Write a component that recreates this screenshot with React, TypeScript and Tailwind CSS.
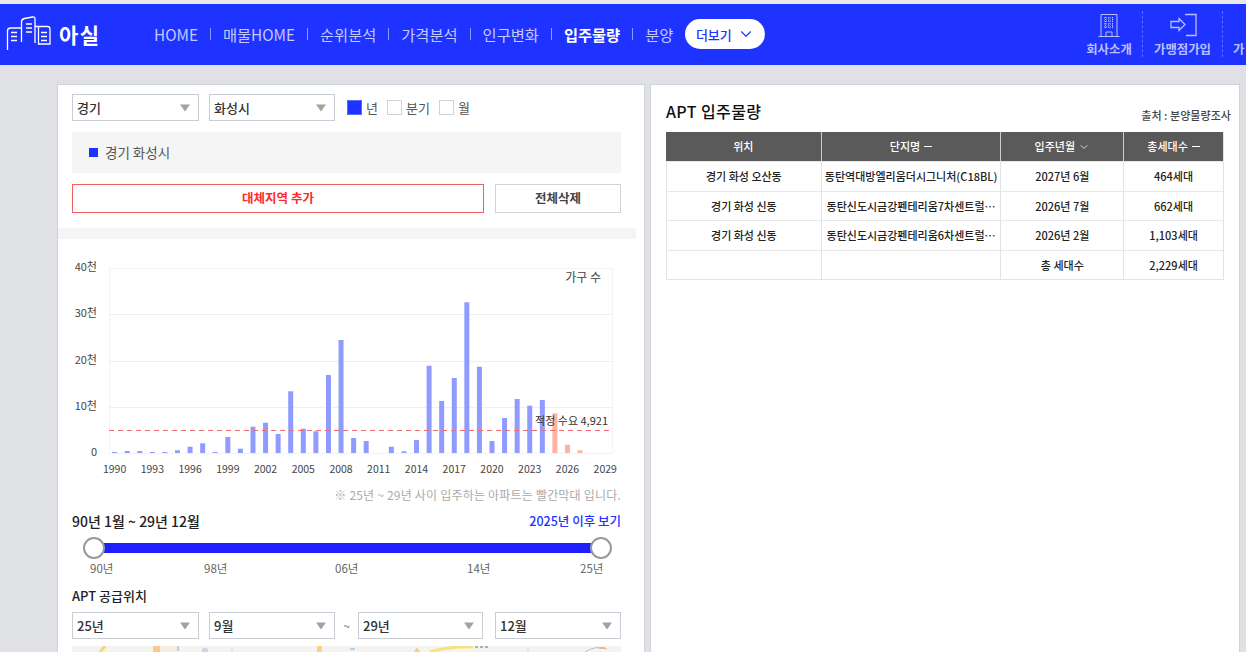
import React from "react";
import { ChevronDown } from "lucide-react";

const heights: [number, number][] = [
  [1990, 1], [1991, 2], [1992, 2], [1993, 1], [1994, 1], [1995, 2.7], [1996, 6.3], [1997, 9.7], [1998, 1], [1999, 16],
  [2000, 4.3], [2001, 26.3], [2002, 30.3], [2003, 19], [2004, 61.7], [2005, 24.3], [2006, 21.7], [2007, 78], [2008, 113],
  [2009, 15], [2010, 12], [2012, 6.3], [2013, 1.7], [2014, 13], [2015, 87.3], [2016, 52], [2017, 75], [2018, 150.7],
  [2019, 86.3], [2020, 12], [2021, 35], [2022, 54], [2023, 47.3], [2024, 53], [2025, 39.7], [2026, 8.3], [2027, 2.7],
];

const xLabels = [1990, 1993, 1996, 1999, 2002, 2005, 2008, 2011, 2014, 2017, 2020, 2023, 2026, 2029];
const yLabels: [string, number][] = [["40천", 268], ["30천", 314], ["20천", 361], ["10천", 407], ["0", 453]];

function Select({ label, w }: { label: string; w: string }) {
  return (
    <div className={`${w} h-[27px] shrink-0 flex items-center justify-between pl-[4px] pr-[8px] bg-white border border-[#c9cdd6] text-[13px] font-medium text-[#333]`}>
      <span>{label}</span>
      <svg width="10" height="8" viewBox="0 0 10 8"><path d="M0 0.5h10L5 7.500z" fill="#a3a3a3" /></svg>
    </div>
  );
}

function Check({ label, on }: { label: string; on?: boolean }) {
  return (
    <div className="flex items-center gap-[4px] text-[13px] text-[#555]">
      <span className={`w-[15px] h-[15px] border ${on ? "border-[#5a6bff] bg-[#1e33ff] ring-1 ring-inset ring-[#1e33ff]" : "border-[#cfd2da] bg-white"}`} />
      <span>{label}</span>
    </div>
  );
}

function NavSep() {
  return <span className="w-px h-[12px] bg-[#8f9bff]" />;
}

function Logo() {
  return (
    <svg width="52" height="36" viewBox="0 16 52 36" fill="none" stroke="#fff" strokeWidth="1.300" className="shrink-0">
      <path d="M7.500 50V31q0-3 3-3H21" />
      <path d="M21.500 42V22q0-3 3-3.500l8-1.500q2.500-.5 2.500 2V43" />
      <path d="M35 26.500h12.500q2.500 0 2.500 2.500V44H38.500V27" />
      <path d="M11 32.500h6M11 36.500h6M11 40.500h6M26 24h6M26 28h6M26 32h6M41 32.500h6M41 36.500h6M41 40.500h6" />
    </svg>
  );
}

function Chart() {
  const x = (y: number) => 114.6 + (y - 1990) * 12.58;
  return (
    <svg width="586" height="250" viewBox="58 240 586 250" className="block mt-px">
      <rect x="109.500" y="268.500" width="503" height="185" fill="#fff" stroke="#f3f3f3" />
      {[314, 361, 407].map((y) => (
        <line key={y} x1="109" x2="612" y1={y + 0.5} y2={y + 0.5} stroke="#efefef" />
      ))}
      {heights.map(([y, h]) => (
        <rect key={y} x={x(y) - 2.500} y={453 - h} width="5" height={h} fill={y >= 2025 ? "#ffb2a4" : "#8f9bff"} />
      ))}
      <line x1="109" x2="612" y1="430.500" y2="430.500" stroke="#f36b6b" strokeDasharray="5 4" />
      {yLabels.map(([t, y]) => (
        <text key={t} x="97" y={y + 3} textAnchor="end" fontSize="11" fill="#444">{t}</text>
      ))}
      {xLabels.map((y) => (
        <text key={y} x={x(y)} y="473" textAnchor="middle" fontSize="10.500" fill="#444">{y}</text>
      ))}
      <text x="601" y="282" textAnchor="end" fontSize="12" fill="#444">가구 수</text>
      <text x="608" y="425" textAnchor="end" fontSize="11" fill="#333">적정 수요 4,921</text>
    </svg>
  );
}

function MapStrip() {
  return (
    <svg width="549" height="6" viewBox="0 0 549 6" className="block bg-[#f3f3f0]">
      <path d="M28 6L33 0" stroke="#f7d774" strokeWidth="3" fill="none" />
      <path d="M81 6V0h7v6z" fill="#f9c98d" />
      <path d="M88 0h18v6H88z" fill="#f6eee2" />
      <path d="M106 0v5" stroke="#a9c4dc" strokeWidth="1.500" />
      <path d="M130 3q3-3 6 0v3h-6z" fill="#c9d6e2" />
      <path d="M160 0v6M456 0v6" stroke="#dddddd" />
      <path d="M245 0h5v6h-5z" fill="#f7d774" />
      <path d="M278 3h5" stroke="#a9d4f0" strokeWidth="2" />
      <path d="M342 6l3-5 3 5z" fill="#f9c98d" />
      <path d="M358 6Q378 0 401 1" stroke="#f7e27a" strokeWidth="3" fill="none" />
      <path d="M403 1h14" stroke="#999" strokeWidth="1.500" strokeDasharray="3 2" />
      <path d="M513 6Q523 -1 535 3" stroke="#bdbdbd" fill="none" />
      <path d="M527 2h6" stroke="#f3b877" strokeWidth="2" />
    </svg>
  );
}

export default function App() {
  return (
    <div className="w-[1246px] h-[652px] overflow-hidden bg-[#dfe1e4] font-['Noto_Sans_CJK_KR','Noto_Sans',sans-serif]">
      <div className="h-[4px] bg-[#e8e8e8]" />
      <header className="h-[60.500px] bg-[#1e33ff] flex items-center overflow-hidden">
        <div className="w-[154px] shrink-0 flex items-center gap-[7px]">
          <Logo />
          <span className="text-white text-[21px] font-bold tracking-[1.500px] leading-none">아실</span>
        </div>
        <nav className="flex items-center gap-[12px] text-[15.300px] text-[#c4caff] shrink-0">
          <span>HOME</span><NavSep />
          <span>매물HOME</span><NavSep />
          <span>순위분석</span><NavSep />
          <span>가격분석</span><NavSep />
          <span>인구변화</span><NavSep />
          <span className="text-white font-bold">입주물량</span><NavSep />
          <span>분양</span>
        </nav>
        <button className="ml-[12px] w-[80px] h-[30px] shrink-0 rounded-full bg-white text-[#1e33ff] text-[13px] font-medium flex items-center justify-center gap-[5px]">
          더보기 <ChevronDown size={18} strokeWidth={1.5} />
        </button>
        <div className="ml-auto flex shrink-0 items-stretch h-[46px] w-[170px] text-[12.400px] font-bold text-[#b9c0ff]">
          <div className="w-[67px] shrink-0 flex flex-col items-center justify-end pb-px border-r border-dashed border-[#5a6bff]">
            <svg width="24" height="24" viewBox="0 0 24 24" fill="none" stroke="#b9c0ff" strokeWidth="1">
              <path d="M4 23V1.500h16V23M1.500 23.500h21M9 23v-4h6v4" />
              <path d="M7 5h10M7 8h10M7 11h10M7 14h10M8.500 4v11M12 4v11M15.500 4v11" strokeDasharray="1 1" />
            </svg>
            <span className="mt-[5px] leading-[14px]">회사소개</span>
          </div>
          <div className="w-[80px] shrink-0 flex flex-col items-center justify-end pb-px border-r border-dashed border-[#5a6bff]">
            <svg width="28" height="24" viewBox="0 0 28 24" fill="none" stroke="#b9c0ff" strokeWidth="1.300">
              <path d="M16 1.500h11v21H17M2 8.500h8V5.500l6 6-6 6V14.500H2z" />
            </svg>
            <span className="mt-[5px] leading-[14px]">가맹점가입</span>
          </div>
          <div className="pl-[10px] pb-px flex items-end leading-[14px]">가</div>
        </div>
      </header>

      <main className="flex gap-[5px] pl-[57px] pt-[19.500px]">
        <section className="w-[588px] h-[600px] shrink-0 bg-white border border-[#cfd2d6]">
          <div className="pl-[14px] pr-[23px]">
            <div className="flex items-center pt-[9px]">
              <Select label="경기" w="w-[127px]" />
              <div className="w-[10px]" />
              <Select label="화성시" w="w-[126px]" />
              <div className="flex items-center gap-[9px] ml-[12px]">
                <Check label="년" on />
                <Check label="분기" />
                <Check label="월" />
              </div>
            </div>
            <div className="mt-[11px] h-[41px] bg-[#f5f5f5] flex items-center pl-[17px] gap-[7px] text-[13.500px] text-[#555]">
              <span className="w-[9px] h-[9px] bg-[#1e33ff]" />
              경기 화성시
            </div>
            <div className="mt-[11px] flex gap-[11px]">
              <button className="w-[412px] h-[29px] border border-[#f06060] text-[#ff2a2a] text-[12.500px] font-bold">대체지역 추가</button>
              <button className="w-[126px] h-[29px] border border-[#cfd2d6] text-[#444] text-[12.500px] font-bold">전체삭제</button>
            </div>
          </div>
          <div className="mt-[15px] w-[578px] h-[11px] bg-[#f5f5f5]" />
          <Chart />
          <div className="pl-[14px] pr-[23px]">
            <p className="mt-[-3px] text-right text-[12px] leading-[16px] tracking-[0.2px] text-[#aaa]">※ 25년 ~ 29년 사이 입주하는 아파트는 빨간막대 입니다.</p>
            <div className="mt-[8px] flex justify-between items-center text-[14px] font-medium leading-[20px]">
              <span className="text-[#222]">90년 1월 ~ 29년 12월</span>
              <span className="text-[#1e33ff] text-[12.500px]">2025년 이후 보기</span>
            </div>
            <div className="mt-[12px] relative ml-[22px] mr-[20px] h-[10px] bg-[#1e1eff]">
              <span className="absolute left-[-11px] top-[-6px] w-[22px] h-[22px] rounded-full bg-white border-2 border-[#999]" />
              <span className="absolute right-[-11px] top-[-6px] w-[22px] h-[22px] rounded-full bg-white border-2 border-[#999]" />
            </div>
            <div className="mt-[7px] relative h-[16px] text-[11.500px] leading-[16px] text-[#666]">
              <span className="absolute left-[18px]">90년</span>
              <span className="absolute left-[132px]">98년</span>
              <span className="absolute left-[263px]">06년</span>
              <span className="absolute left-[395px]">14년</span>
              <span className="absolute left-[508px]">25년</span>
            </div>
            <div className="mt-[10px] text-[13px] font-medium leading-[20px] text-[#222]">APT 공급위치</div>
            <div className="mt-[6px] flex items-center">
              <Select label="25년" w="w-[127px]" />
              <div className="w-[10px]" />
              <Select label="9월" w="w-[126px]" />
              <span className="w-[23px] text-center text-[12px] text-[#666]">~</span>
              <Select label="29년" w="w-[125px]" />
              <div className="w-[12px]" />
              <Select label="12월" w="w-[126px]" />
            </div>
            <div className="mt-[7px]"><MapStrip /></div>
          </div>
        </section>

        <section className="w-[590px] h-[600px] shrink-0 bg-white border border-[#cfd2d6] px-[15px]">
          <div className="h-[47px] flex justify-between items-end pb-[9px]">
            <span className="text-[16px] font-medium leading-[24px] tracking-[0.4px] text-[#111]">APT 입주물량</span>
            <span className="text-[11px] font-medium text-[#444] mr-[-7px] leading-[16px] tracking-[0.05px]">출처 : 분양물량조사</span>
          </div>
          <div className="w-[558px] border-r border-b border-[#e3e3e3] text-[11px] font-medium text-[#222]">
            <div className="flex h-[29px] bg-[#5a5a5a] text-white">
              <div className="w-[156px] flex items-center justify-center border-r border-[#ccc]">위치</div>
              <div className="w-[180px] flex items-center justify-center border-r border-[#ccc] gap-[4px]">단지명 <span className="w-[8px] h-px bg-white" /></div>
              <div className="w-[123px] flex items-center justify-center border-r border-[#ccc] gap-[3px]">입주년월 <ChevronDown size={12} strokeWidth={1.5} /></div>
              <div className="w-[99px] flex items-center justify-center gap-[4px]">총세대수 <span className="w-[8px] h-px bg-white" /></div>
            </div>
            {[
              ["경기 화성 오산동", "동탄역대방엘리움더시그니처(C18BL)", "2027년 6월", "464세대"],
              ["경기 화성 신동", "동탄신도시금강펜테리움7차센트럴…", "2026년 7월", "662세대"],
              ["경기 화성 신동", "동탄신도시금강펜테리움6차센트럴…", "2026년 2월", "1,103세대"],
              ["", "", "총 세대수", "2,229세대"],
            ].map((r, i) => (
              <div key={i} className="flex h-[29.500px] border-t first:border-t-0 border-[#e8e8e8]">
                <div className="w-[156px] flex items-center justify-center border-l border-r border-[#e3e3e3]">{r[0]}</div>
                <div className="w-[180px] flex items-center justify-center border-r border-[#e3e3e3] whitespace-nowrap">{r[1]}</div>
                <div className="w-[123px] flex items-center justify-center border-r border-[#e3e3e3]">{r[2]}</div>
                <div className="w-[99px] flex items-center justify-center">{r[3]}</div>
              </div>
            ))}
          </div>
        </section>
      </main>
    </div>
  );
}
